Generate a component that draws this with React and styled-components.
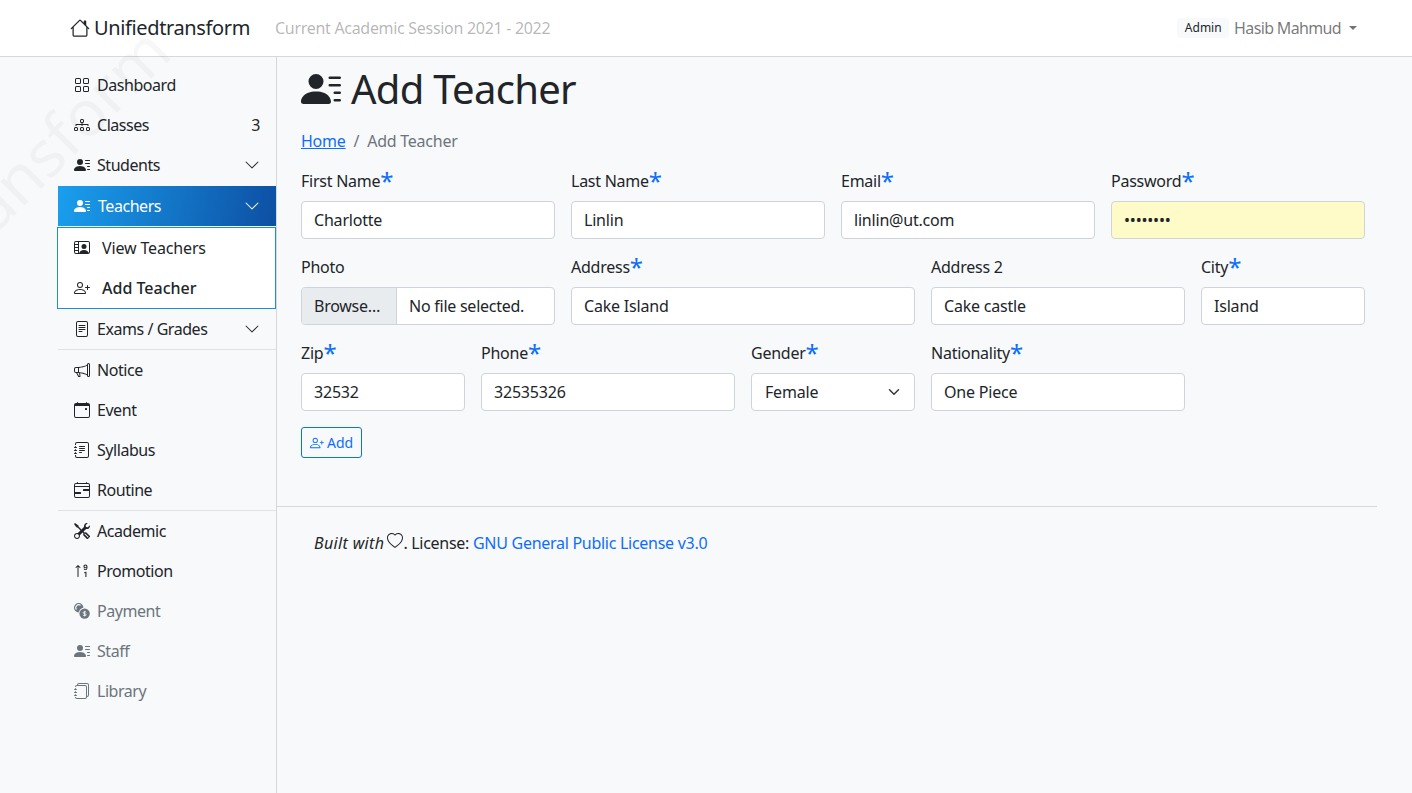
import React from 'react';
import styled, { createGlobalStyle } from 'styled-components';
import {
    BsHouse, BsGrid, BsDiagram3, BsPersonLinesFill, BsChevronDown, BsPersonVideo2, BsPersonPlus,
    BsFileText, BsMegaphone, BsCalendarEvent, BsJournalText, BsCalendar4Range, BsTools,
    BsSortNumericUpAlt, BsJournals, BsHeart
} from 'react-icons/bs';

const CoinsIcon = () => (
    <svg width="16" height="16" viewBox="0 0 16 16" fill="currentColor">
        <circle cx="4.7" cy="4.7" r="4.7" />
        <path d="M6.6 2.4A3 3 0 0 0 2.4 6.6" fill="none" stroke="#f8f9fa" strokeWidth="1.1" />
        <circle cx="10.6" cy="10.6" r="6" fill="#f8f9fa" />
        <circle cx="10.6" cy="10.6" r="5.2" />
        <path d="M12.2 9.3c-.4-.7-2.9-.9-3 .4-.1 1.3 3.1.7 3 2.1-.1 1.2-2.8 1-3.3.2M10.6 7.9v5.4" fill="none" stroke="#f8f9fa" strokeWidth=".9" />
    </svg>
);

const menuTop = [
    { label: 'Dashboard', icon: BsGrid },
    { label: 'Classes', icon: BsDiagram3, count: 3 },
    { label: 'Students', icon: BsPersonLinesFill, caret: true },
];

const menuMiddle = [
    { label: 'Notice', icon: BsMegaphone },
    { label: 'Event', icon: BsCalendarEvent },
    { label: 'Syllabus', icon: BsJournalText },
    { label: 'Routine', icon: BsCalendar4Range },
];

const menuBottom = [
    { label: 'Academic', icon: BsTools },
    { label: 'Promotion', icon: BsSortNumericUpAlt },
    { label: 'Payment', icon: CoinsIcon, muted: true },
    { label: 'Staff', icon: BsPersonLinesFill, muted: true },
    { label: 'Library', icon: BsJournals, muted: true },
];

const NavEntry = ({ item }) => {
    const Icon = item.icon;
    return (
        <NavItem $muted={item.muted}>
            <Icon size={16} />
            <NavLabel>{item.label}</NavLabel>
            {item.count && <span>{item.count}</span>}
            {item.caret && <BsChevronDown size={16} />}
        </NavItem>
    );
};

const Field = ({ label, span, required, children }) => (
    <FieldBox $span={span}>
        <FieldLabel>{label}{required && <Star>*</Star>}</FieldLabel>
        {children}
    </FieldBox>
);

const TextField = ({ label, span, value }) => (
    <Field label={label} span={span} required>
        <Input type="text" value={value} readOnly />
    </Field>
);

const App = () => {
    return (
        <>
            <GlobalStyle />
            <Watermark>Unifiedtransform</Watermark>
            <Header>
                <Brand>
                    <BsHouse size={20} />
                    <span>Unifiedtransform</span>
                </Brand>
                <Session>Current Academic Session 2021 - 2022</Session>
                <UserArea>
                    <RoleBadge>Admin</RoleBadge>
                    <UserName>Hasib Mahmud</UserName>
                    <Caret />
                </UserArea>
            </Header>
            <Body>
                <Sidebar>
                    {menuTop.map((item) => <NavEntry key={item.label} item={item} />)}
                    <ActiveItem>
                        <BsPersonLinesFill size={16} />
                        <NavLabel>Teachers</NavLabel>
                        <BsChevronDown size={16} />
                    </ActiveItem>
                    <SubMenu>
                        <SubItem>
                            <BsPersonVideo2 size={16} />
                            <span>View Teachers</span>
                        </SubItem>
                        <SubItem $current>
                            <BsPersonPlus size={16} />
                            <span>Add Teacher</span>
                        </SubItem>
                    </SubMenu>
                    <NavEntry item={{ label: 'Exams / Grades', icon: BsFileText, caret: true }} />
                    <Divider />
                    {menuMiddle.map((item) => <NavEntry key={item.label} item={item} />)}
                    <Divider />
                    {menuBottom.map((item) => <NavEntry key={item.label} item={item} />)}
                </Sidebar>
                <Main>
                    <Content>
                        <PageTitle>
                            <BsPersonLinesFill size={40} />
                            <span>Add Teacher</span>
                        </PageTitle>
                        <Breadcrumb>
                            <a href="#home">Home</a>
                            <Slash>/</Slash>
                            <span>Add Teacher</span>
                        </Breadcrumb>
                        <FormGrid>
                            <TextField label="First Name" span={3} value="Charlotte" />
                            <TextField label="Last Name" span={3} value="Linlin" />
                            <TextField label="Email" span={3} value="linlin@ut.com" />
                            <Field label="Password" span={3} required>
                                <PasswordInput type="password" value="linlin12" readOnly />
                            </Field>
                            <Field label="Photo" span={3}>
                                <FileBox>
                                    <FileButton>Browse…</FileButton>
                                    <FileName>No file selected.</FileName>
                                </FileBox>
                            </Field>
                            <TextField label="Address" span={4} value="Cake Island" />
                            <Field label="Address 2" span={3}>
                                <Input type="text" value="Cake castle" readOnly />
                            </Field>
                            <TextField label="City" span={2} value="Island" />
                            <TextField label="Zip" span={2} value="32532" />
                            <TextField label="Phone" span={3} value="32535326" />
                            <Field label="Gender" span={2} required>
                                <Select defaultValue="Female">
                                    <option>Male</option>
                                    <option>Female</option>
                                </Select>
                            </Field>
                            <TextField label="Nationality" span={3} value="One Piece" />
                        </FormGrid>
                        <AddButton type="button">
                            <BsPersonPlus size={14} />
                            Add
                        </AddButton>
                    </Content>
                    <Footer>
                        <BuiltWith>Built with</BuiltWith><FooterHeart><BsHeart size={16} /></FooterHeart>. License: <a href="#license">GNU General Public License v3.0</a>
                    </Footer>
                </Main>
            </Body>
        </>
    );
};

export default App;

const GlobalStyle = createGlobalStyle`
    html, body {
        margin: 0;
        height: 100%;
        background: #f8f9fa;
        color: #212529;
        font-family: "Noto Sans", sans-serif;
        font-size: 16px;
        line-height: 24px;
        letter-spacing: -0.25px;
        overflow: hidden;
    }
    a {
        color: #0d6efd;
    }
    * {
        box-sizing: border-box;
    }
`;

const Watermark = styled.div`
    position: absolute;
    left: -285px;
    top: 190px;
    font-size: 64px;
    line-height: 64px;
    letter-spacing: 0;
    color: rgba(0, 0, 0, 0.03);
    white-space: nowrap;
    transform: rotate(-45deg);
    pointer-events: none;
`;

const Header = styled.header`
    height: 57px;
    background: #fff;
    border-bottom: 1px solid #d6d8da;
    display: flex;
    align-items: center;
    padding: 0 55px 0 70px;
`;

const Brand = styled.div`
    display: flex;
    align-items: center;
    gap: 4px;
    font-size: 20px;
    letter-spacing: -0.37px;
    color: #212529;
`;

const Session = styled.div`
    margin-left: 25px;
    letter-spacing: -0.3px;
    color: rgba(0, 0, 0, 0.3);
`;

const UserArea = styled.div`
    margin-left: auto;
    display: flex;
    align-items: center;
`;

const RoleBadge = styled.span`
    background: #f8f9fa;
    border-radius: 4px;
    color: #212529;
    font-size: 12px;
    line-height: 20px;
    letter-spacing: 0;
    padding: 0 7.5px;
    margin-right: 5px;
`;

const UserName = styled.span`
    letter-spacing: -0.65px;
    color: rgba(0, 0, 0, 0.55);
`;

const Caret = styled.span`
    margin-left: 8px;
    border-top: 4.8px solid rgba(0, 0, 0, 0.55);
    border-left: 4.8px solid transparent;
    border-right: 4.8px solid transparent;
`;

const Body = styled.div`
    display: flex;
    height: 736px;
`;

const Sidebar = styled.nav`
    width: 219px;
    margin-left: 58px;
    padding-top: 8px;
    border-right: 1px solid #d6d8da;
    flex-shrink: 0;
`;

const NavItem = styled.div`
    height: 40px;
    display: flex;
    align-items: center;
    gap: 7px;
    padding: 0 16px;
    letter-spacing: -0.45px;
    color: ${(props) => (props.$muted ? '#6c757d' : '#212529')};
`;

const NavLabel = styled.span`
    flex: 1;
`;

const ActiveItem = styled(NavItem)`
    margin-top: 1px;
    gap: 8px;
    color: #fff;
    background: linear-gradient(100deg, #1a9fee 0%, #0d4fa3 100%);
`;

const SubMenu = styled.div`
    margin: 1px 0 0 -1px;
    height: 82px;
    background: #fff;
    border: 1px solid #1c8fd8;
`;

const SubItem = styled.div`
    height: 40px;
    display: flex;
    align-items: center;
    gap: 12px;
    padding-left: 16px;
    letter-spacing: ${(props) => (props.$current ? '0' : '-0.15px')};
    font-weight: ${(props) => (props.$current ? 500 : 400)};
`;

const Divider = styled.div`
    height: 1px;
    background: #dee2e6;
`;

const Main = styled.main`
    flex: 1;
    padding-right: 35px;
`;

const Content = styled.div`
    padding: 8px 12px 48px 24px;
    border-bottom: 1px solid #d6d8da;
`;

const PageTitle = styled.h1`
    margin: 0;
    height: 48px;
    display: flex;
    align-items: center;
    gap: 10px;
    font-size: 40px;
    line-height: 48px;
    letter-spacing: -0.7px;
    font-weight: 400;
`;

const Breadcrumb = styled.div`
    margin-top: 16px;
    height: 24px;
    display: flex;
    color: #6c757d;
`;

const Slash = styled.span`
    margin: 0 8px;
`;

const FormGrid = styled.div`
    margin-top: 16px;
    display: grid;
    grid-template-columns: repeat(12, 74px);
    gap: 16px;
`;

const FieldBox = styled.div`
    grid-column: span ${(props) => props.$span};
`;

const FieldLabel = styled.div`
    height: 24px;
    margin-bottom: 8px;
    white-space: nowrap;
`;

const Star = styled.span`
    color: #0d6efd;
    font-size: 24px;
    line-height: 0;
    letter-spacing: 0;
    vertical-align: -3px;
`;

const Input = styled.input`
    display: block;
    width: 100%;
    height: 38px;
    padding: 0 12px;
    border: 1px solid #ced4da;
    border-radius: 4px;
    background: #fff;
    color: #212529;
    font: inherit;
    letter-spacing: -0.2px;
    outline: none;
`;

const PasswordInput = styled(Input)`
    background: #fefbc8;
`;

const FileBox = styled.div`
    height: 38px;
    display: flex;
    border: 1px solid #ced4da;
    border-radius: 4px;
    background: #fff;
    overflow: hidden;
`;

const FileButton = styled.span`
    width: 95px;
    padding: 6px 12px;
    background: #e9ecef;
    border-right: 1px solid #ced4da;
    white-space: nowrap;
    flex-shrink: 0;
`;

const FileName = styled.span`
    padding: 6px 12px;
    white-space: nowrap;
`;

const Select = styled.select`
    display: block;
    width: 100%;
    height: 38px;
    padding: 0 36px 0 13px;
    border: 1px solid #ced4da;
    border-radius: 4px;
    color: #212529;
    font: inherit;
    letter-spacing: -0.2px;
    appearance: none;
    background: #fff url("data:image/svg+xml,%3csvg xmlns='http://www.w3.org/2000/svg' viewBox='0 0 16 16'%3e%3cpath fill='none' stroke='%23343a40' stroke-linecap='round' stroke-linejoin='round' stroke-width='2' d='M2 5l6 6 6-6'/%3e%3c/svg%3e") no-repeat right 12px center / 16px 12px;
`;

const AddButton = styled.button`
    margin-top: 16px;
    height: 31px;
    display: flex;
    align-items: center;
    gap: 3px;
    padding: 0 8px;
    border: 1px solid #0d6efd;
    border-radius: 3px;
    background: transparent;
    color: #0d6efd;
    font: inherit;
    font-size: 14px;
`;

const BuiltWith = styled.em`
    letter-spacing: 0.35px;
`;

const FooterHeart = styled.span`
    margin-left: 3px;
`;

const Footer = styled.footer`
    padding: 24px 37px;
    letter-spacing: -0.28px;
    a {
        text-decoration: none;
    }
`;
